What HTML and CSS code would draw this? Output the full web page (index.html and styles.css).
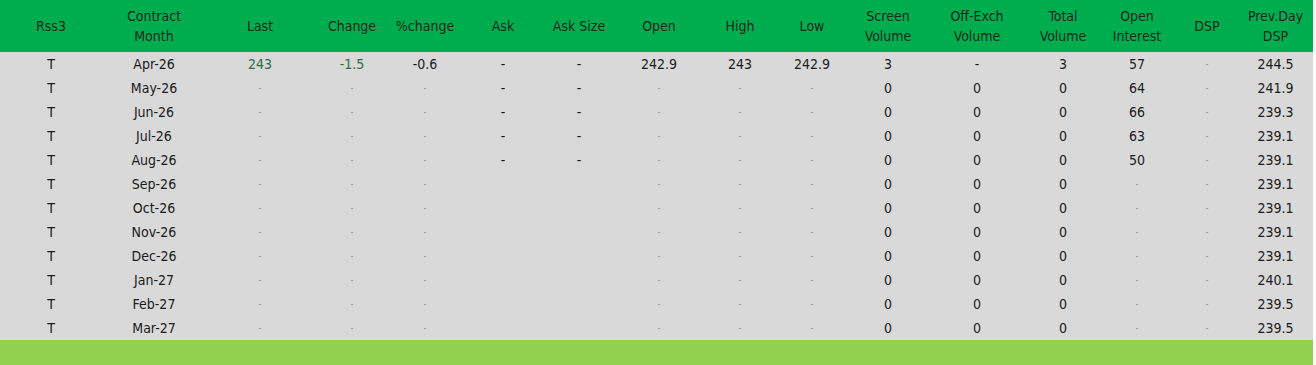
FILE: index.html
```html
<!DOCTYPE html>
<html>
<head>
<meta charset="utf-8">
<link rel="stylesheet" href="styles.css">
</head>
<body>
<table class="grid">
<colgroup>
<col class="c-code"><col class="c-month"><col class="c-last"><col class="c-change"><col class="c-pct"><col class="c-ask"><col class="c-asksize"><col class="c-open"><col class="c-high"><col class="c-low"><col class="c-screen"><col class="c-offex"><col class="c-total"><col class="c-oi"><col class="c-dsp"><col class="c-prev">
</colgroup>
<thead>
<tr>
<th>Rss3</th><th>Contract<br>Month</th><th>Last</th><th>Change</th><th>%change</th><th>Ask</th><th>Ask Size</th><th>Open</th><th>High</th><th>Low</th><th>Screen<br>Volume</th><th>Off-Exch<br>Volume</th><th>Total<br>Volume</th><th>Open<br>Interest</th><th>DSP</th><th>Prev.Day<br>DSP</th>
</tr>
</thead>
<tbody>
<tr><td>T</td><td>Apr-26</td><td class="up">243</td><td class="up">-1.5</td><td>-0.6</td><td>-</td><td>-</td><td>242.9</td><td>243</td><td>242.9</td><td>3</td><td>-</td><td>3</td><td>57</td><td class="nil">-</td><td>244.5</td></tr>
<tr><td>T</td><td>May-26</td><td class="nil">-</td><td class="nil">-</td><td class="nil">-</td><td>-</td><td>-</td><td class="nil">-</td><td class="nil">-</td><td class="nil">-</td><td>0</td><td>0</td><td>0</td><td>64</td><td class="nil">-</td><td>241.9</td></tr>
<tr><td>T</td><td>Jun-26</td><td class="nil">-</td><td class="nil">-</td><td class="nil">-</td><td>-</td><td>-</td><td class="nil">-</td><td class="nil">-</td><td class="nil">-</td><td>0</td><td>0</td><td>0</td><td>66</td><td class="nil">-</td><td>239.3</td></tr>
<tr><td>T</td><td>Jul-26</td><td class="nil">-</td><td class="nil">-</td><td class="nil">-</td><td>-</td><td>-</td><td class="nil">-</td><td class="nil">-</td><td class="nil">-</td><td>0</td><td>0</td><td>0</td><td>63</td><td class="nil">-</td><td>239.1</td></tr>
<tr><td>T</td><td>Aug-26</td><td class="nil">-</td><td class="nil">-</td><td class="nil">-</td><td>-</td><td>-</td><td class="nil">-</td><td class="nil">-</td><td class="nil">-</td><td>0</td><td>0</td><td>0</td><td>50</td><td class="nil">-</td><td>239.1</td></tr>
<tr><td>T</td><td>Sep-26</td><td class="nil">-</td><td class="nil">-</td><td class="nil">-</td><td></td><td></td><td class="nil">-</td><td class="nil">-</td><td class="nil">-</td><td>0</td><td>0</td><td>0</td><td class="nil">-</td><td class="nil">-</td><td>239.1</td></tr>
<tr><td>T</td><td>Oct-26</td><td class="nil">-</td><td class="nil">-</td><td class="nil">-</td><td></td><td></td><td class="nil">-</td><td class="nil">-</td><td class="nil">-</td><td>0</td><td>0</td><td>0</td><td class="nil">-</td><td class="nil">-</td><td>239.1</td></tr>
<tr><td>T</td><td>Nov-26</td><td class="nil">-</td><td class="nil">-</td><td class="nil">-</td><td></td><td></td><td class="nil">-</td><td class="nil">-</td><td class="nil">-</td><td>0</td><td>0</td><td>0</td><td class="nil">-</td><td class="nil">-</td><td>239.1</td></tr>
<tr><td>T</td><td>Dec-26</td><td class="nil">-</td><td class="nil">-</td><td class="nil">-</td><td></td><td></td><td class="nil">-</td><td class="nil">-</td><td class="nil">-</td><td>0</td><td>0</td><td>0</td><td class="nil">-</td><td class="nil">-</td><td>239.1</td></tr>
<tr><td>T</td><td>Jan-27</td><td class="nil">-</td><td class="nil">-</td><td class="nil">-</td><td></td><td></td><td class="nil">-</td><td class="nil">-</td><td class="nil">-</td><td>0</td><td>0</td><td>0</td><td class="nil">-</td><td class="nil">-</td><td>240.1</td></tr>
<tr><td>T</td><td>Feb-27</td><td class="nil">-</td><td class="nil">-</td><td class="nil">-</td><td></td><td></td><td class="nil">-</td><td class="nil">-</td><td class="nil">-</td><td>0</td><td>0</td><td>0</td><td class="nil">-</td><td class="nil">-</td><td>239.5</td></tr>
<tr><td>T</td><td>Mar-27</td><td class="nil">-</td><td class="nil">-</td><td class="nil">-</td><td></td><td></td><td class="nil">-</td><td class="nil">-</td><td class="nil">-</td><td>0</td><td>0</td><td>0</td><td class="nil">-</td><td class="nil">-</td><td>239.5</td></tr>
</tbody>
<tfoot>
<tr><td colspan="16"></td></tr>
</tfoot>
</table>
</body>
</html>
```
FILE: styles.css
```css
html, body {
  margin: 0;
  padding: 0;
  background: #ffffff;
}

.grid {
  width: 1313px;
  border-collapse: collapse;
  border-spacing: 0;
  table-layout: fixed;
  font-family: "DejaVu Sans Condensed", "DejaVu Sans", sans-serif;
  font-size: 14px;
  color: #1b1b1b;
}

.c-code { width: 102px; }
.c-month { width: 104px; }
.c-last { width: 108px; }
.c-change { width: 76px; }
.c-pct { width: 70px; }
.c-ask { width: 86px; }
.c-asksize { width: 66px; }
.c-open { width: 94px; }
.c-high { width: 68px; }
.c-low { width: 76px; }
.c-screen { width: 76px; }
.c-offex { width: 102px; }
.c-total { width: 70px; }
.c-oi { width: 78px; }
.c-dsp { width: 62px; }
.c-prev { width: 75px; }

.grid th {
  background: #00ad4e;
  color: #1a2a1e;
  font-weight: normal;
  height: 52px;
  padding: 0;
  line-height: 20px;
  text-align: center;
  vertical-align: middle;
}

.grid td {
  background: #d9d9d9;
  height: 24px;
  padding: 0;
  line-height: 24px;
  text-align: center;
  vertical-align: middle;
}

.grid td.up {
  color: #2a6e47;
}

.grid td.nil {
  color: #8a8a8a;
  font-size: 9px;
}

.grid tfoot td {
  background: #92d050;
  height: 25px;
}
```
